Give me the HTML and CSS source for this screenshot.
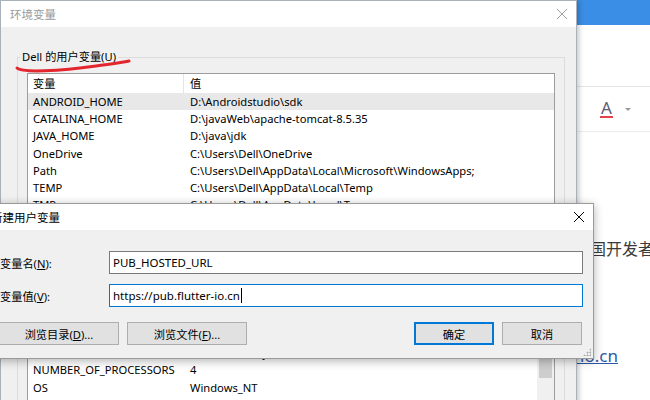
FILE: index.html
```html
<!DOCTYPE html>
<html>
	<head>
		<meta charset="UTF-8">
		<title>新建用户变量</title>
		<link rel="stylesheet" href="styles.css">
	</head>
	<body>
		<!-- 背后的网页 -->
		<div class="page">
			<div class="page-top"></div>
			<div class="page-tools"></div>
			<div class="page-format">
				<span class="font-color">A</span>
				<span class="caret"></span>
			</div>
			<div class="page-text">
				<p class="para">中国开发者</p>
				<p class="para link-line"><a href="#">https://pub.flutter-io.cn</a></p>
			</div>
		</div>

		<!-- 环境变量 -->
		<div class="win env">
			<div class="titlebar inactive">
				<span class="title">环境变量</span>
				<svg class="close" width="10" height="10" viewBox="0 0 10 10"><path d="M0 0L10 10M10 0L0 10"/></svg>
			</div>
			<div class="win-body">
				<div class="group">
					<div class="group-label">Dell 的用户变量(U)</div>
					<div class="listbox user-list">
						<div class="list-main">
							<div class="list-head"><div class="c1">变量</div><div class="c2">值</div></div>
							<div class="row selected"><div class="c1">ANDROID_HOME</div><div class="c2">D:\Androidstudio\sdk</div></div>
							<div class="row"><div class="c1">CATALINA_HOME</div><div class="c2">D:\javaWeb\apache-tomcat-8.5.35</div></div>
							<div class="row"><div class="c1">JAVA_HOME</div><div class="c2">D:\java\jdk</div></div>
							<div class="row"><div class="c1">OneDrive</div><div class="c2">C:\Users\Dell\OneDrive</div></div>
							<div class="row"><div class="c1">Path</div><div class="c2">C:\Users\Dell\AppData\Local\Microsoft\WindowsApps;</div></div>
							<div class="row"><div class="c1">TEMP</div><div class="c2">C:\Users\Dell\AppData\Local\Temp</div></div>
							<div class="row"><div class="c1">TMP</div><div class="c2">C:\Users\Dell\AppData\Local\Temp</div></div>
						</div>
					</div>
					<div class="group-buttons">
						<button class="btn">新建(N)...</button>
						<button class="btn">编辑(E)...</button>
						<button class="btn">删除(D)</button>
					</div>
				</div>
				<div class="group sys">
					<div class="group-label">系统变量(S)</div>
					<div class="listbox sys-list">
						<div class="list-main">
							<div class="list-head"><div class="c1">变量</div><div class="c2">值</div></div>
							<div class="row"><div class="c1">ComSpec</div><div class="c2">C:\WINDOWS\system32\cmd.exe</div></div>
							<div class="row"><div class="c1">DriverData</div><div class="c2">C:\Windows\System32\Drivers\DriverData</div></div>
							<div class="row"><div class="c1">NUMBER_OF_PROCESSORS</div><div class="c2">4</div></div>
							<div class="row"><div class="c1">OS</div><div class="c2">Windows_NT</div></div>
						</div>
						<div class="vscroll"><div class="thumb"></div></div>
					</div>
				</div>
			</div>
		</div>

		<!-- 红色手画线 -->
		<svg class="mark" width="140" height="80" viewBox="0 0 140 80">
			<path d="M17 68C22 73 60 71 96 66C110 64 120 63 129 61"/>
		</svg>

		<!-- 新建用户变量 -->
		<div class="win dialog">
			<div class="titlebar">
				<span class="title">新建用户变量</span>
				<svg class="close" width="10" height="10" viewBox="0 0 10 10"><path d="M0 0L10 10M10 0L0 10"/></svg>
			</div>
			<div class="dlg-body">
				<div class="field">
					<label class="field-name">变量名(<u>N</u>):</label>
					<div class="textbox">PUB_HOSTED_URL</div>
				</div>
				<div class="field">
					<label class="field-name">变量值(<u>V</u>):</label>
					<div class="textbox focus">https://pub.flutter-io.cn<span class="cursor"></span></div>
				</div>
				<div class="dlg-buttons">
					<button class="btn wide">浏览目录(<u>D</u>)...</button>
					<button class="btn wide">浏览文件(<u>F</u>)...</button>
					<div class="spacer"></div>
					<button class="btn ok">确定</button>
					<button class="btn">取消</button>
				</div>
			</div>
			<span class="grip"></span>
		</div>
	</body>
</html>
```

FILE: styles.css
```css
*{
	margin: 0;
	padding: 0;
	box-sizing: border-box;
}
body{
	position: relative;
	width: 650px;
	height: 400px;
	overflow: hidden;
	background: #fff;
	font-family: "Noto Sans", "Noto Sans CJK SC", sans-serif;
	font-size: 11.2px;
	color: #000;
}
u{
	text-decoration: underline;
	text-underline-offset: 1px;
}

/* 背后的网页 */
.page-top{
	height: 25px;
	background: #3a8ee6;
}
.page-tools{
	height: 62px;
	border-bottom: 1px solid #e6e6e6;
}
.page-format{
	display: flex;
	align-items: center;
	height: 45px;
	padding-left: 600px;
	border-bottom: 1px solid #ececec;
}
.font-color{
	font-size: 17px;
	line-height: 16px;
	color: #5b5b73;
	border-bottom: 2px solid #e0444a;
	padding: 0 1px;
}
.caret{
	width: 0;
	height: 0;
	margin-left: 12px;
	border-left: 3px solid transparent;
	border-right: 3px solid transparent;
	border-top: 3px solid #999;
}
.para{
	white-space: nowrap;
	font-family: "Noto Sans CJK SC", sans-serif;
	font-size: 16px;
	line-height: 24px;
	color: #3a3a3a;
	padding-left: 574px;
	margin-top: 104px;
}
.link-line{
	font-family: "Noto Sans", "Noto Sans CJK SC", sans-serif;
	font-size: 17px;
	padding-left: 0;
	text-align: right;
	padding-right: 32px;
	margin-top: 84px;
}
.link-line a{
	color: #2c5aa8;
}

/* 窗口 */
.win{
	position: absolute;
	display: flex;
	flex-direction: column;
	background: #f0f0f0;
	overflow: hidden;
}
.titlebar{
	display: flex;
	align-items: center;
	justify-content: space-between;
	height: 26px;
	flex: none;
	background: #fff;
	padding: 0 9px;
	font-size: 11.5px;
}
.titlebar .close{
	stroke: #000;
	stroke-width: 1;
}
.titlebar.inactive .title{
	color: #9a9a9a;
}
.titlebar.inactive .close{
	stroke: #a0a0a0;
}

.env{
	left: 0;
	top: 0;
	width: 577px;
	height: 420px;
	border: 1px solid #a9b1bd;
	box-shadow: 2px 0 5px rgba(0,0,0,.22);
}
.group{
	margin: 30px 11px 0 16px;
	padding: 0 9px 8px;
	border: 1px solid #dcdcdc;
}
.group.sys{
	margin-top: 20px;
}
.group-label{
	width: fit-content;
	height: 16px;
	line-height: 16px;
	margin: -9px 0 0 -7px;
	padding: 0 2px;
	background: #f0f0f0;
}
.listbox{
	display: flex;
	margin-top: 8px;
	background: #fff;
	border: 1px solid #9c9c9c;
	overflow: hidden;
}
.user-list{
	height: 157px;
}
.sys-list{
	margin-top: 9px;
	height: 120px;
}
.list-main{
	flex: 1;
}
.list-head,
.row{
	display: grid;
	grid-template-columns: 156px 353px;
	white-space: nowrap;
}
.list-head{
	height: 19px;
	line-height: 19px;
}
.list-head .c1{
	border-right: 1px solid #e5e5e5;
}
.c1{
	padding-left: 5px;
	overflow: hidden;
}
.c2{
	padding-left: 6px;
	overflow: hidden;
}
.row{
	height: 17.2px;
	line-height: 17.2px;
}
.row.selected{
	background: #e8e8e8;
}
.vscroll{
	width: 17px;
	background: #f0f0f0;
	padding: 50px 2px 0;
}
.thumb{
	height: 20px;
	background: #cdcdcd;
}
.group-buttons{
	display: flex;
	justify-content: flex-end;
	gap: 8px;
	margin-top: 8px;
}

.btn{
	height: 23px;
	width: 80px;
	font: inherit;
	background: #e1e1e1;
	border: 1px solid #adadad;
	color: #000;
}
.btn.wide{
	width: 120px;
}
.btn.ok{
	border-color: #0078d7;
	box-shadow: inset 0 0 0 1px #0078d7;
}

/* 红色手画线 */
.mark{
	position: absolute;
	left: 0;
	top: 0;
	fill: none;
	stroke: #e3262d;
	stroke-width: 3;
	stroke-linecap: round;
}

/* 新建用户变量 */
.dialog{
	left: -24px;
	top: 203px;
	width: 618px;
	height: 156px;
	border: 1px solid #9a9a9a;
	box-shadow: 0 2px 9px rgba(0,0,0,.3);
}
.dialog .titlebar{
	padding-left: 14px;
	padding-right: 9px;
}
.dlg-body{
	display: flex;
	flex-direction: column;
	flex: 1;
	gap: 10px;
	padding: 21px 10px 0 23px;
}
.field{
	display: flex;
	align-items: center;
}
.field-name{
	width: 109px;
}
.textbox{
	display: flex;
	align-items: center;
	flex: 1;
	height: 23px;
	padding-left: 3px;
	background: #fff;
	border: 1px solid #7a7a7a;
	white-space: nowrap;
	font-size: 11.5px;
}
.textbox.focus{
	border-color: #0078d7;
}
.cursor{
	width: 1px;
	height: 15px;
	margin-left: 1px;
	background: #000;
}
.dlg-buttons{
	display: flex;
	gap: 8px;
	margin: 5px 1px 0 -1px;
}
.spacer{
	flex: 1;
}
.grip{
	position: absolute;
	right: 2px;
	bottom: 2px;
	width: 8px;
	height: 8px;
	background: radial-gradient(circle, #a8a8a8 45%, transparent 50%) 0 0 / 3px 3px;
	clip-path: polygon(100% 0, 100% 100%, 0 100%);
}
```
